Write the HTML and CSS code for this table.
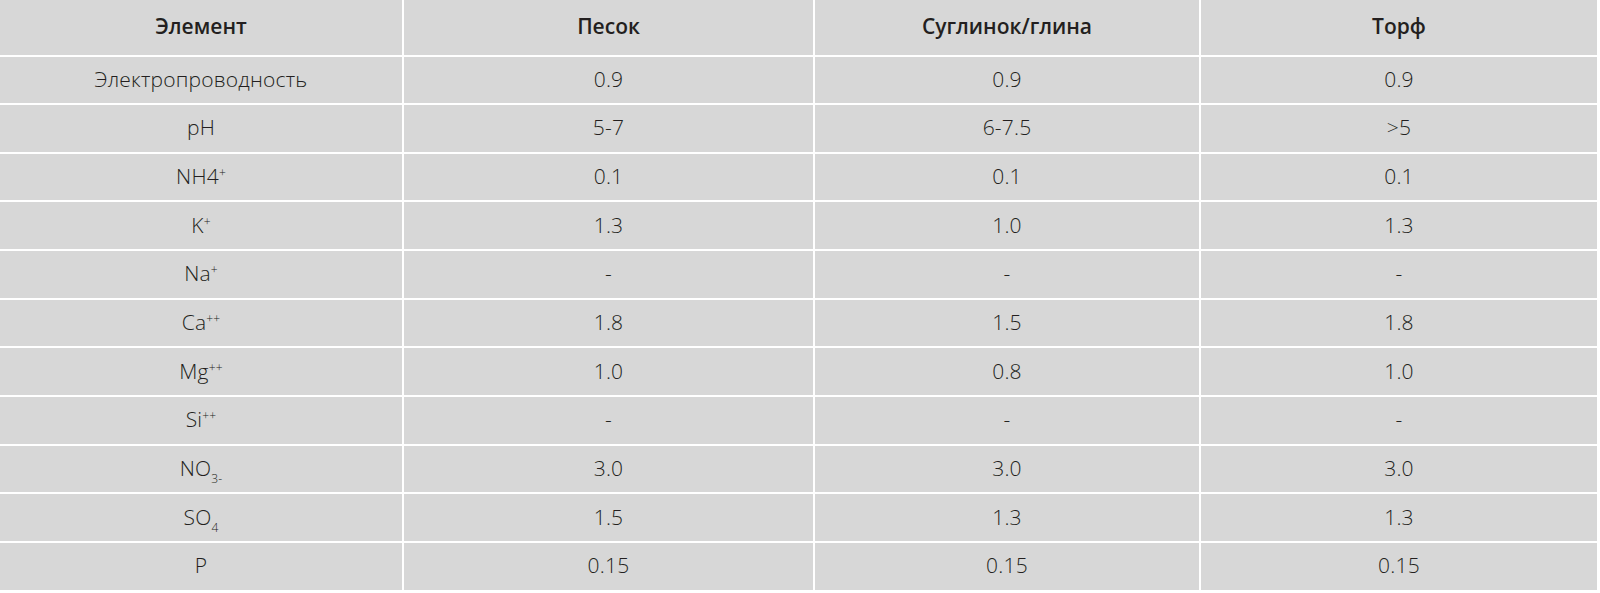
FILE: index.html
```html
<!DOCTYPE html>
<html lang="ru">
<head>
<meta charset="utf-8">
<title>Таблица</title>
<link rel="stylesheet" href="styles.css">
</head>
<body>
<div class="table">
  <div class="cell head"><span>Элемент</span></div>
  <div class="cell head"><span>Песок</span></div>
  <div class="cell head"><span>Суглинок/глина</span></div>
  <div class="cell head"><span>Торф</span></div>

  <div class="cell"><span>Электропроводность</span></div>
  <div class="cell"><span>0.9</span></div>
  <div class="cell"><span>0.9</span></div>
  <div class="cell"><span>0.9</span></div>

  <div class="cell"><span>pH</span></div>
  <div class="cell"><span>5-7</span></div>
  <div class="cell"><span>6-7.5</span></div>
  <div class="cell"><span>&gt;5</span></div>

  <div class="cell"><span>NH4<sup>+</sup></span></div>
  <div class="cell"><span>0.1</span></div>
  <div class="cell"><span>0.1</span></div>
  <div class="cell"><span>0.1</span></div>

  <div class="cell"><span>K<sup>+</sup></span></div>
  <div class="cell"><span>1.3</span></div>
  <div class="cell"><span>1.0</span></div>
  <div class="cell"><span>1.3</span></div>

  <div class="cell"><span>Na<sup>+</sup></span></div>
  <div class="cell"><span>-</span></div>
  <div class="cell"><span>-</span></div>
  <div class="cell"><span>-</span></div>

  <div class="cell"><span>Ca<sup>++</sup></span></div>
  <div class="cell"><span>1.8</span></div>
  <div class="cell"><span>1.5</span></div>
  <div class="cell"><span>1.8</span></div>

  <div class="cell"><span>Mg<sup>++</sup></span></div>
  <div class="cell"><span>1.0</span></div>
  <div class="cell"><span>0.8</span></div>
  <div class="cell"><span>1.0</span></div>

  <div class="cell"><span>Si<sup>++</sup></span></div>
  <div class="cell"><span>-</span></div>
  <div class="cell"><span>-</span></div>
  <div class="cell"><span>-</span></div>

  <div class="cell"><span>NO<sub>3-</sub></span></div>
  <div class="cell"><span>3.0</span></div>
  <div class="cell"><span>3.0</span></div>
  <div class="cell"><span>3.0</span></div>

  <div class="cell"><span>SO<sub>4</sub></span></div>
  <div class="cell"><span>1.5</span></div>
  <div class="cell"><span>1.3</span></div>
  <div class="cell"><span>1.3</span></div>

  <div class="cell"><span>P</span></div>
  <div class="cell"><span>0.15</span></div>
  <div class="cell"><span>0.15</span></div>
  <div class="cell"><span>0.15</span></div>
</div>
</body>
</html>
```
FILE: styles.css
```css
html, body {
  margin: 0;
  padding: 0;
  background: #ffffff;
}
body {
  font-family: "Open Sans", "Liberation Sans", sans-serif;
  color: #231f20;
  overflow: hidden;
}
.table {
  width: 1597px;
  display: grid;
  grid-template-columns: 402px 409px 384px 396px;
  grid-template-rows: 54.5px repeat(11, 46.65px);
  gap: 2px;
  background: #ffffff;
}
.cell {
  background: #d7d7d7;
  display: flex;
  align-items: center;
  justify-content: center;
  font-size: 21px;
  font-weight: 300;
  line-height: 1;
  letter-spacing: 0.2px;
}
.cell span {
  display: block;
  white-space: nowrap;
  margin-top: -1px;
}
.head {
  font-weight: 600;
  font-size: 21px;
  letter-spacing: 0;
}
sup {
  font-size: 12px;
  vertical-align: 7px;
  line-height: 0;
}
sub {
  font-size: 12px;
  vertical-align: -7px;
  line-height: 0;
}
```
